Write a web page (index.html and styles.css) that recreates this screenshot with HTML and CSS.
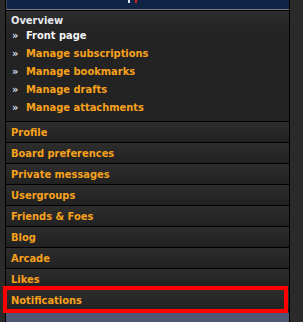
FILE: index.html
```html
<!DOCTYPE html>
<html lang="en">
<head>
    <meta charset="UTF-8">
    <title>User Control Panel</title>
    <link rel="stylesheet" href="styles.css">
</head>
<body>
    <div class="page">
        <div class="panel">
            <div class="panel-head">
                <svg class="head-icon" width="12" height="4" viewBox="0 0 12 4">
                    <rect x="1" y="0" width="2" height="3" fill="#e8e8f0"/>
                    <rect x="8" y="0" width="2" height="3" fill="#d02020"/>
                </svg>
            </div>

            <div class="overview">
                <h3>Overview</h3>
                <ul class="sublinks">
                    <li class="active"><span class="bullet">»</span>Front page</li>
                    <li><span class="bullet">»</span>Manage subscriptions</li>
                    <li><span class="bullet">»</span>Manage bookmarks</li>
                    <li><span class="bullet">»</span>Manage drafts</li>
                    <li><span class="bullet">»</span>Manage attachments</li>
                </ul>
            </div>

            <ul class="tabs">
                <li>Profile</li>
                <li>Board preferences</li>
                <li>Private messages</li>
                <li>Usergroups</li>
                <li>Friends &amp; Foes</li>
                <li>Blog</li>
                <li>Arcade</li>
                <li>Likes</li>
                <li>Notifications</li>
            </ul>

            <div class="next-block"></div>
        </div>
        <div class="highlight"></div>
    </div>
</body>
</html>
```

FILE: styles.css
```css
/* Page de fond */
body {
  margin: 0;
  background-color: #2f2f2f;
  font-family: "DejaVu Sans Condensed", "DejaVu Sans", sans-serif;
  font-size: 11px;
  font-weight: bold;
}

.page {
  position: relative;
  width: 303px;
  height: 322px;
  overflow: hidden;
  padding-left: 5px;
  box-sizing: border-box;
  background-color: #2a2a2a;
}

/* Panneau central */
.panel {
  width: 283px;
  height: 322px;
  border-left: 1px solid #000;
  border-right: 1px solid #000;
  background-color: #232323;
}

.panel-head {
  position: relative;
  height: 9px;
  background-color: #0f2444;
  border-left: 1px solid #3d4a5e;
  border-bottom: 1px solid #7a7f88;
}

.head-icon {
  position: absolute;
  left: 120px;
  top: 0;
}

/* Bloc Overview */
.overview {
  border-top: 1px solid #000;
  border-bottom: 1px solid #000;
  padding: 4px 0 4px 5px;
  height: 102px;
  background-image: linear-gradient(to bottom, #2e2e2e 0px, #262626 12px, #232323 30px);
}

.overview h3 {
  margin: 0;
  font-size: 11px;
  line-height: 12px;
  color: #e6e9ee;
}

.sublinks {
  list-style: none;
  margin: 0;
  padding: 0;
  line-height: 18px;
  color: #f8a21c;
}

.sublinks .bullet {
  display: inline-block;
  width: 14px;
  padding-left: 1px;
  color: #d6dde6;
}

.sublinks .active {
  color: #f2f2f2;
}

/* Onglets */
.tabs {
  list-style: none;
  margin: 0;
  padding: 0;
}

.tabs li {
  height: 19px;
  line-height: 19px;
  padding: 1px 0 0 5px;
  border-bottom: 1px solid #000;
  color: #f8a21c;
  background-image: linear-gradient(to bottom, #2d2d2d, #212121);
}

.next-block {
  margin-top: 2px;
  height: 12px;
  background-color: #4b5773;
}

/* Cadre rouge autour de Notifications */
.highlight {
  position: absolute;
  left: 3px;
  top: 286px;
  width: 277px;
  height: 19px;
  border: 4px solid #ff0000;
}
```
